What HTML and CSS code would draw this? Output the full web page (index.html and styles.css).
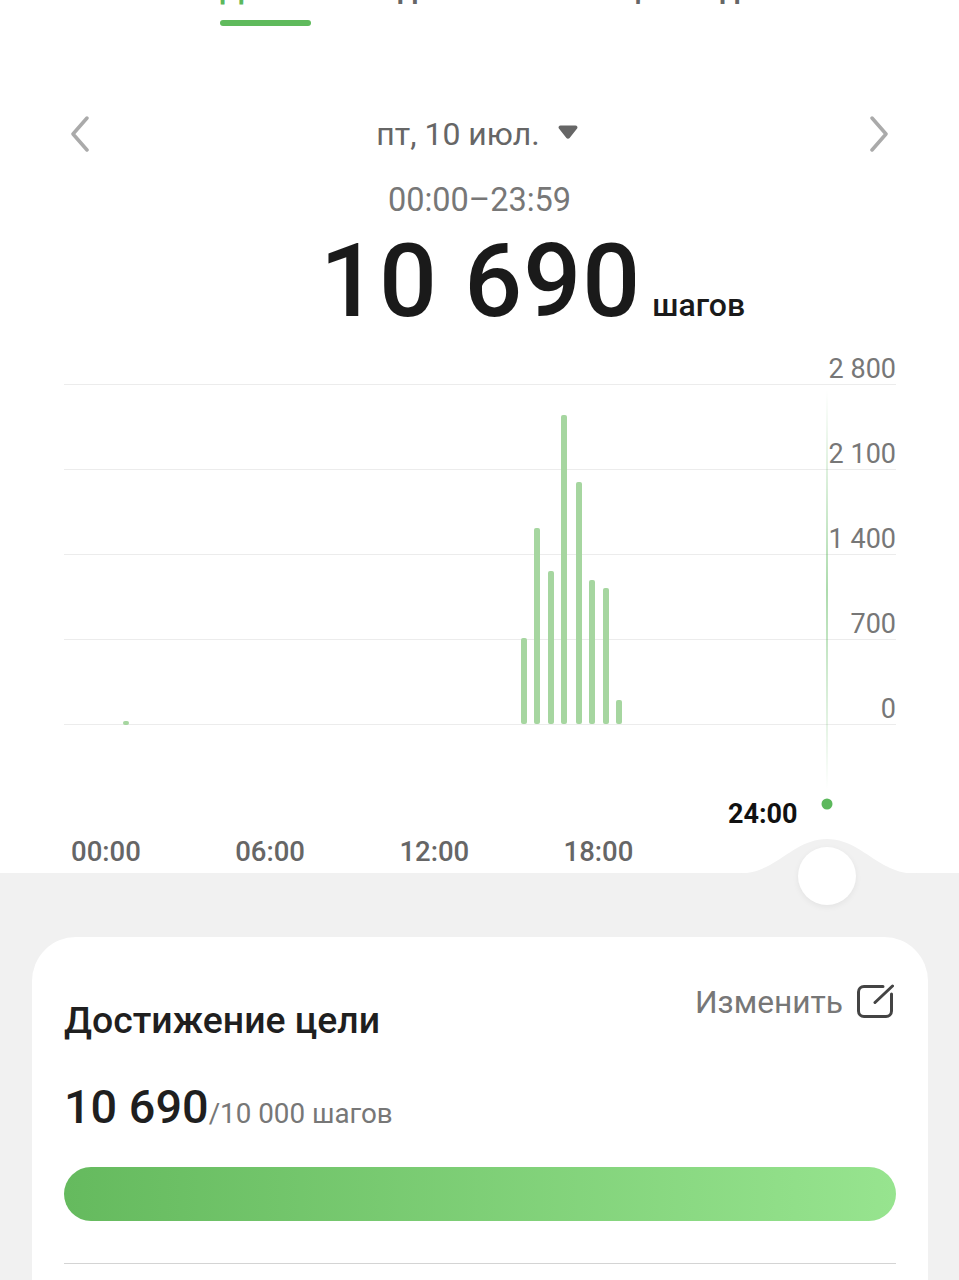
FILE: index.html
```html
<!DOCTYPE html>
<html lang="ru">
<head>
    <meta charset="UTF-8">
    <title>Шаги</title>
    <link rel="stylesheet" href="styles.css">
</head>
<body>
    <div class="top">
        <div class="tabs">
            <span class="tab tab-active">День</span>
            <span class="tab">Неделя</span>
            <span class="tab">Месяц</span>
            <span class="tab">Год</span>
        </div>
        <div class="tab-line"></div>

        <div class="date-row">
            <svg class="chevron" width="20" height="36" viewBox="0 0 20 36"><path d="M17 2 3 18l14 16"/></svg>
            <div class="date">
                <span>пт, 10 июл.</span>
                <svg class="date-arrow" width="20" height="14" viewBox="0 0 20 14"><path d="M2.500 0.500h15a2 2 0 0 1 1.600 3.100l-7.500 9.400a2 2 0 0 1-3.200 0L0.900 3.600A2 2 0 0 1 2.500 0.500z"/></svg>
            </div>
            <svg class="chevron" width="20" height="36" viewBox="0 0 20 36"><path d="M3 2l14 16L3 34"/></svg>
        </div>

        <div class="time-range">00:00–23:59</div>
        <div class="total">
            <span class="total-value">10 690</span>
            <span class="total-unit">шагов</span>
        </div>

        <div class="chart">
            <div class="chart-row chart-row-first"><span>2 800</span></div>
            <div class="chart-row"><span>2 100</span></div>
            <div class="chart-row"><span>1 400</span></div>
            <div class="chart-row"><span>700</span></div>
            <div class="chart-row"><span>0</span></div>

            <svg class="chart-bars" width="832" height="460" viewBox="64 350 832 460">
                <defs>
                    <linearGradient id="cursor-fade" x1="0" y1="0" x2="0" y2="1">
                        <stop offset="0" stop-color="#5cb85c" stop-opacity="0"/>
                        <stop offset="0.5" stop-color="#5cb85c"/>
                        <stop offset="1" stop-color="#5cb85c" stop-opacity="0"/>
                    </linearGradient>
                </defs>
                <g fill="#a6d6a0">
                    <rect x="123" y="721" width="6" height="4" rx="2"/>
                    <rect x="521" y="638" width="6" height="86" rx="2"/>
                    <rect x="534" y="528" width="6" height="196" rx="2"/>
                    <rect x="548" y="571" width="6" height="153" rx="2"/>
                    <rect x="561" y="415" width="6" height="309" rx="2"/>
                    <rect x="576" y="482" width="6" height="242" rx="2"/>
                    <rect x="589" y="580" width="6" height="144" rx="2"/>
                    <rect x="603" y="588" width="6" height="136" rx="2"/>
                    <rect x="616" y="700" width="6" height="24" rx="2"/>
                </g>
                <rect x="826.500" y="390" width="1" height="400" fill="url(#cursor-fade)"/>
                <circle cx="827" cy="804" r="5.500" fill="#5cb85c"/>
            </svg>
        </div>

        <div class="axis">
            <span>00:00</span>
            <span>06:00</span>
            <span>12:00</span>
            <span>18:00</span>
        </div>
        <div class="cursor-time">24:00</div>

        <svg class="bump" width="190" height="36" viewBox="0 0 190 36"><path d="M0 36C20 36 28 32 38 27C56 17 72 1 95 1C118 1 134 17 152 27C162 32 170 36 190 36z"/></svg>
    </div>
    <div class="thumb"></div>

    <div class="bottom">
        <div class="card">
            <div class="card-head">
                <div class="card-title">Достижение цели</div>
                <div class="edit">
                    <span>Изменить</span>
                    <svg width="38" height="38" viewBox="0 0 38 38"><path d="M27 3.500H8A5.500 5.500 0 0 0 2.500 9v19A5.500 5.500 0 0 0 8 33.500h22a5.500 5.500 0 0 0 5.500-5.500V11"/><path d="M36.500 3 19 19.500"/></svg>
                </div>
            </div>
            <div class="goal">
                <span class="goal-value">10 690</span><span class="goal-rest">/10 000 шагов</span>
            </div>
            <div class="progress"></div>
            <div class="card-line"></div>
        </div>
    </div>
</body>
</html>
```
FILE: styles.css
```css
html, body {
    margin: 0;
    height: 1280px;
    overflow: hidden;
}

body {
    font-family: Roboto, "Noto Sans", sans-serif;
    background-color: #f1f1f1;
    position: relative;
}

.top {
    display: flow-root;
    position: relative;
    height: 873px;
    background-color: #fff;
}

/* tabs are cut by the top of the screen, only the letter tails show */
.tabs {
    display: grid;
    grid-template-columns: 138px 184px 146px auto;
    height: 40px;
    margin-top: -32px;
    padding: 0 0 12px 220px;
    align-items: end;
    font-size: 32px;
    line-height: 40px;
    font-weight: 500;
    color: #666;
}

.tab-active {
    color: #5cb85c;
}

.tab-line {
    width: 91px;
    height: 6px;
    margin-left: 220px;
    border-radius: 3px;
    background-color: #5fba5c;
}

.date-row {
    display: flex;
    justify-content: space-between;
    align-items: center;
    margin-top: 90px;
    padding: 0 70px;
    height: 36px;
}

.chevron path {
    fill: none;
    stroke: #aaa;
    stroke-width: 3.500;
    stroke-linecap: round;
    stroke-linejoin: round;
}

.date {
    display: flex;
    align-items: center;
    gap: 18px;
    margin-left: -5px;
    font-size: 32px;
    color: #666;
}

.date-arrow {
    margin-top: -4px;
}

.date-arrow path {
    fill: #666;
}

.time-range {
    margin-top: 29px;
    text-align: center;
    font-size: 32.500px;
    line-height: 38px;
    color: #777;
}

.total {
    display: flex;
    align-items: baseline;
    gap: 11px;
    height: 90px;
    margin-top: 17px;
    padding-left: 320px;
    line-height: 90px;
    color: #1a1a1a;
}

.total-value {
    font-size: 102px;
    font-weight: 500;
    letter-spacing: 1px;
}

.total-unit {
    font-size: 32px;
    font-weight: 500;
}

.chart {
    position: relative;
    margin: 24px 63px 0 64px;
    height: 374px;
}

.chart-row {
    display: flex;
    justify-content: flex-end;
    align-items: flex-end;
    height: 84px;
    border-bottom: 1px solid #ececec;
    font-size: 27px;
    line-height: 30px;
    color: #777;
}

.chart-row-first {
    height: 34px;
}

.chart-bars {
    position: absolute;
    top: 0;
    left: 0;
}

.axis {
    display: flex;
    gap: 94.200px;
    padding-left: 71px;
    margin-top: 112px;
    font-size: 27.500px;
    font-weight: 500;
    line-height: 32px;
    color: #666;
}

.axis span {
    width: 70px;
}

.cursor-time {
    position: absolute;
    top: 798px;
    left: 728px;
    font-size: 27px;
    font-weight: 700;
    line-height: 32px;
    color: #111;
}

.bump {
    position: absolute;
    top: 838px;
    left: 732px;
}

.bump path {
    fill: #f1f1f1;
}

.thumb {
    position: absolute;
    top: 847px;
    left: 798px;
    width: 58px;
    height: 58px;
    border-radius: 50%;
    background-color: #fff;
    box-shadow: 0 2px 6px rgba(0, 0, 0, 0.06);
}

.bottom {
    padding: 64px 31px 0 32px;
}

.card {
    height: 400px;
    padding: 0 32px;
    background-color: #fff;
    border-radius: 44px;
}

.card-head {
    display: flex;
    justify-content: space-between;
    height: 130px;
}

.card-title {
    margin-top: 61px;
    font-size: 37.400px;
    line-height: 44px;
    font-weight: 500;
    color: #1f1f1f;
}

.edit {
    display: flex;
    gap: 13px;
    height: 38px;
    margin-top: 46px;
    margin-right: 2px;
    align-items: center;
    font-size: 31.700px;
    color: #777;
}

.edit svg {
    fill: none;
    stroke: #444;
    stroke-width: 3;
    stroke-linecap: round;
}

.goal {
    height: 50px;
    display: flex;
    align-items: baseline;
    margin-top: 15px;
    line-height: 50px;
}

.goal-value {
    font-size: 46.800px;
    font-weight: 500;
    color: #1f1f1f;
}

.goal-rest {
    font-size: 27.800px;
    color: #777;
}

.progress {
    height: 54px;
    margin-top: 35px;
    border-radius: 27px;
    background: linear-gradient(to right, #65ba5e, #97e48f);
}

.card-line {
    height: 1px;
    margin-top: 42px;
    background-color: #d4d4d4;
}
```
